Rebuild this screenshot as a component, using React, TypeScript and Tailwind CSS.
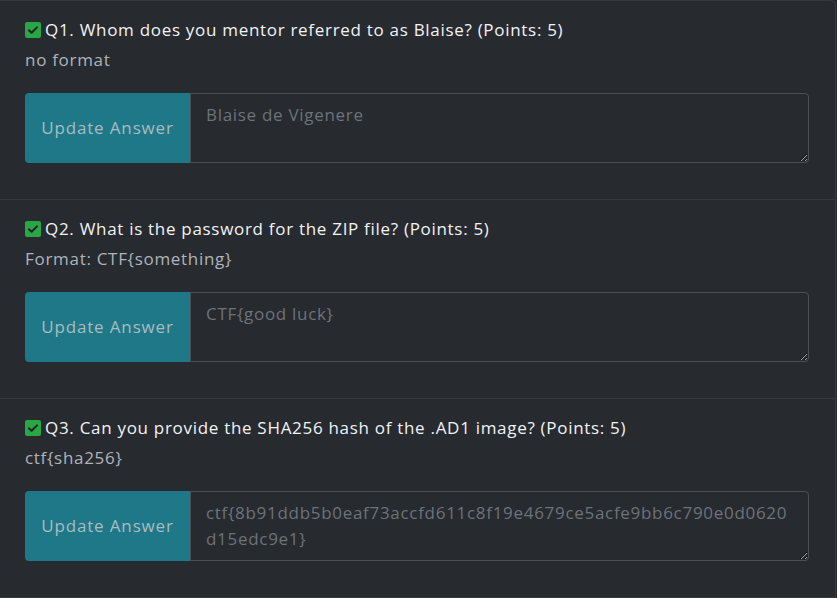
const questions = [
  {
    id: 1,
    title: "Q1. Whom does you mentor referred to as Blaise? (Points: 5)",
    format: "no format",
    answer: "Blaise de Vigenere",
  },
  {
    id: 2,
    title: "Q2. What is the password for the ZIP file? (Points: 5)",
    format: "Format: CTF{something}",
    answer: "CTF{good luck}",
  },
  {
    id: 3,
    title: "Q3. Can you provide the SHA256 hash of the .AD1 image? (Points: 5)",
    format: "ctf{sha256}",
    answer: "ctf{8b91ddb5b0eaf73accfd611c8f19e4679ce5acfe9bb6c790e0d0620d15edc9e1}",
  },
];

function CheckedBox() {
  return (
    <svg viewBox="0 0 16 16" className="w-4 h-4 shrink-0">
      <rect x="0" y="0" width="16" height="16" rx="2" fill="#28a745" />
      <path d="M4 8.2l2.6 2.6L12 5.4" fill="none" stroke="#1f2226" strokeWidth="2" strokeLinecap="round" strokeLinejoin="round" />
    </svg>
  );
}

export default function App() {
  return (
    <div className="min-h-screen bg-[#272a2f] font-['Open_Sans',sans-serif] tracking-[0.7px]">
      <div className="w-[836px] border-t border-r border-[#363a40] rounded-tr-md">
        {questions.map((q) => (
          <div key={q.id} className="pl-[25px] pr-[26px] pt-[17px] pb-[36px] border-b border-[#363a40]">
            <div className="flex items-center gap-[4px] h-6 text-[17px] text-[#f1f3f5]">
              <CheckedBox />
              <span>{q.title}</span>
            </div>
            <div className="mt-[6px] h-6 leading-6 text-[17px] text-[#aeb4ba]">{q.format}</div>
            <div className="mt-[21px] flex h-[70px]">
              <button className="w-[165px] shrink-0 rounded-l-[4px] bg-[#1e7887] text-[17px] tracking-[0.85px] text-[#a9bcc0]">
                Update Answer
              </button>
              <textarea
                placeholder={q.answer}
                className="flex-1 rounded-r-[4px] border border-[#4b4f56] bg-[#272a2f] pl-[15px] pr-4 py-[8px] text-[17px] leading-[26px] text-[#e9ecef] placeholder:text-[#6c737a] outline-none"
              />
            </div>
          </div>
        ))}
      </div>
    </div>
  );
}
